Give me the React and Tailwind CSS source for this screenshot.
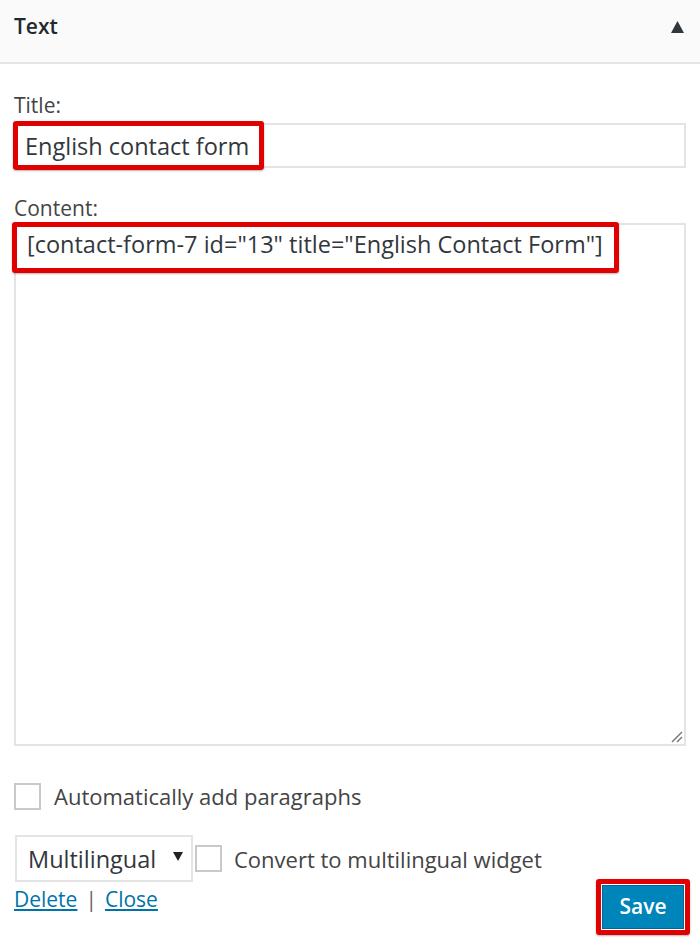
import React from 'react';

// Overlay marking used in the screenshot (red annotation boxes)
const Mark = ({ className }) => (
    <div className={`absolute border-[5px] border-[#e00000] rounded-[3px] pointer-events-none shadow-[0_1px_2px_rgba(0,0,0,0.3)] ${className}`} />
);

const App = () => {
    return (
        <div className="w-[700px] h-[949px] bg-white text-[#444] overflow-hidden" style={{ fontFamily: '"Open Sans", "Noto Sans", sans-serif' }}>
            {/* Widget header */}
            <div className="h-[64px] bg-[#fafafa] border-b-2 border-[#e5e5e5] flex items-center justify-between pl-[14px] pr-[16px]">
                <h3 className="text-[21px] leading-[28px] font-semibold text-[#23282d] -mt-[10px]">Text</h3>
                <svg width="13" height="12" viewBox="0 0 13 12" className="-mt-[8px]">
                    <polygon points="6.5,0 13,12 0,12" fill="#32373c" />
                </svg>
            </div>

            <div className="px-[14px]">
                {/* Title */}
                <label className="block mt-[27px] text-[21px] leading-[28px] text-[#444]">Title:</label>
                <div className="relative mt-[4px] h-[45px] border-2 border-[#e4e4e4] flex items-center pl-[9px]">
                    <span className="text-[23.5px] leading-[30px] text-[#32373c]">English contact form</span>
                    <Mark className="-left-[3px] -top-[4px] w-[251px] h-[49px]" />
                </div>

                {/* Content */}
                <label className="block mt-[26px] text-[21px] leading-[28px] text-[#444]">Content:</label>
                <div className="relative mt-[1px] h-[523px] border-2 border-[#e4e4e4] pl-[11px] pt-[4px]">
                    <span className="text-[23.5px] leading-[30px] text-[#32373c]">[contact-form-7 id="13" title="English Contact Form"]</span>
                    <Mark className="-left-[4px] -top-[3px] w-[607px] h-[51px]" />
                    {/* resize grip */}
                    <svg width="12" height="12" viewBox="0 0 12 12" className="absolute right-[1px] bottom-[1px]">
                        <line x1="1" y1="11" x2="11" y2="1" stroke="#777" strokeWidth="1.5" />
                        <line x1="6" y1="11" x2="11" y2="6" stroke="#777" strokeWidth="1.5" />
                    </svg>
                </div>

                {/* Auto paragraphs */}
                <div className="mt-[36px] flex items-center gap-[13px]">
                    <div className="w-[27px] h-[27px] border-2 border-[#c9c9c9] bg-white" />
                    <span className="text-[22px] leading-[28px] text-[#444]">Automatically add paragraphs</span>
                </div>

                {/* Multilingual row */}
                <div className="mt-[25px] flex items-center">
                    <div className="ml-[1px] w-[178px] h-[47px] border-2 border-[#e4e4e4] flex items-center justify-between pl-[11px] pr-[8px]">
                        <span className="text-[23.5px] leading-[30px] text-[#32373c]">Multilingual</span>
                        <svg width="10" height="9" viewBox="0 0 10 9" className="-mt-[4px]">
                            <polygon points="0,0 10,0 5,9" fill="#222" />
                        </svg>
                    </div>
                    <div className="ml-[2px] w-[27px] h-[27px] border-2 border-[#c9c9c9] bg-white" />
                    <span className="ml-[12px] text-[22px] leading-[28px] text-[#444]">Convert to multilingual widget</span>
                </div>

                {/* Footer actions */}
                <div className="flex justify-between items-start">
                    <div className="mt-[3px] text-[21px] leading-[28px]">
                        <a href="#" className="text-[#0073aa] underline">Delete</a>
                        <span className="text-[#666] mx-[8px]">|</span>
                        <a href="#" className="text-[#0073aa] underline">Close</a>
                    </div>
                    <div className="relative mt-[3px] mr-[2px]">
                        <button className="w-[82px] h-[44px] bg-[#0085ba] text-white text-[21px] font-semibold border border-[#006799]">Save</button>
                        <Mark className="-left-[6px] -top-[6px] w-[94px] h-[56px]" />
                    </div>
                </div>
            </div>
        </div>
    );
};

export default App;
